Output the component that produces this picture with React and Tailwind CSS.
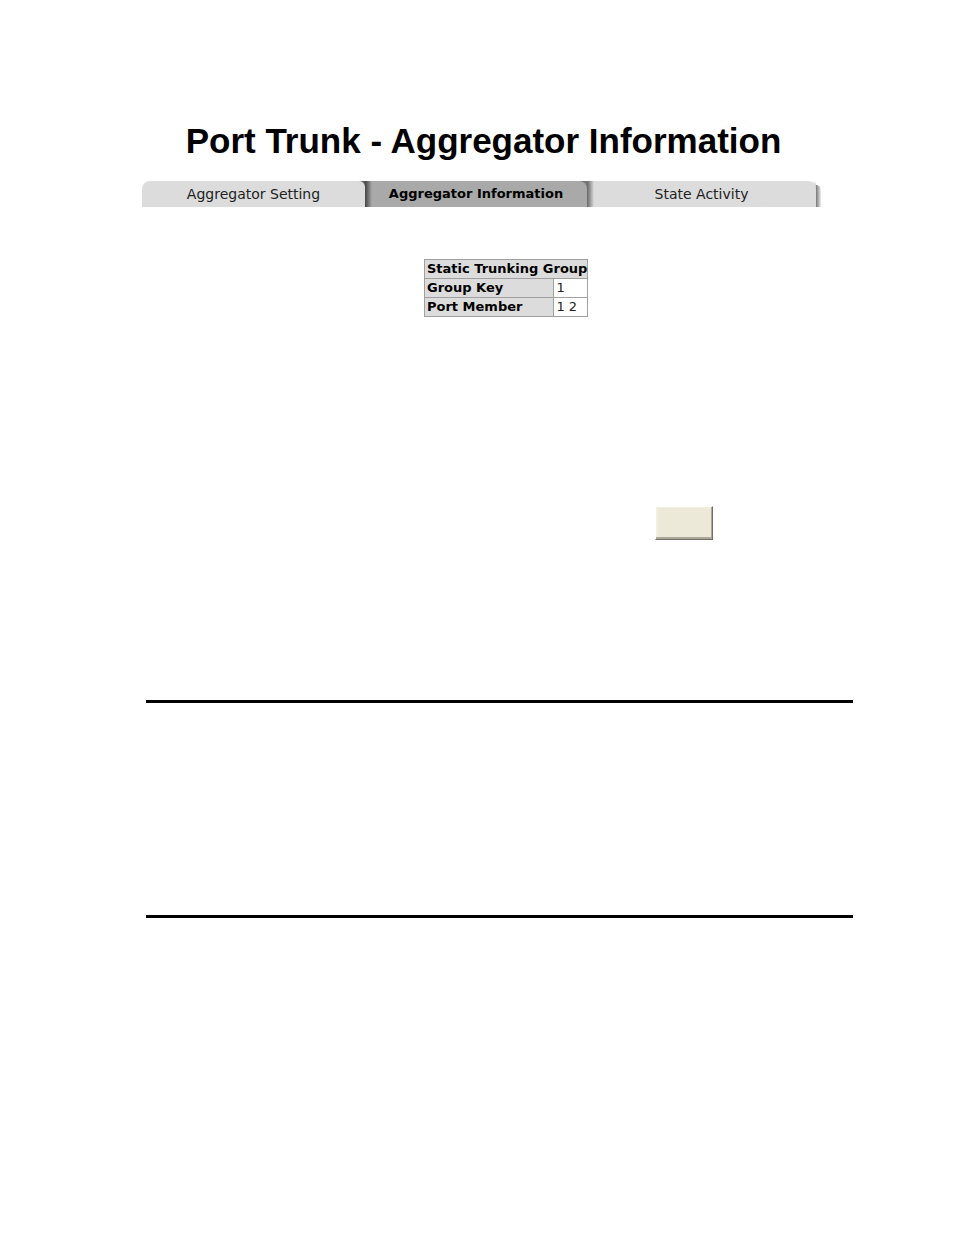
import React from "react";

const rows = [
	{ name: "Group Key", value: "1" },
	{ name: "Port Member", value: "1 2" },
];

const Tabs = () => {
	return (
		<nav className="mt-5 font-['DejaVu_Sans',sans-serif] text-sm leading-[26px] text-[#222222]">
			<ul className="flex text-center">
				<li className="grow-[223] basis-0 bg-linear-to-r from-white from-90% to-[#555555]">
					<a href="#" className="block rounded-tl-lg rounded-tr-md bg-[#dcdcdc]">
						Aggregator Setting
					</a>
				</li>
				<li className="grow-[222] basis-0 bg-[#777777]">
					<a
						href="#"
						aria-current="page"
						className="block rounded-tr-lg bg-linear-to-r from-[#444444] to-[#a9a9a9] to-[7px] text-[13px] font-bold text-black"
					>
						Aggregator Information
					</a>
				</li>
				<li className="grow-[229] basis-0 bg-linear-to-b from-white to-[#999999] to-[10px]">
					<a
						href="#"
						className="block rounded-tr-lg bg-linear-to-r from-[#666666] to-[#dcdcdc] to-[7px]"
					>
						State Activity
					</a>
				</li>
				<li
					aria-hidden="true"
					className="mt-1 w-[5px] rounded-tr-md bg-linear-to-r from-[#777777] to-[#eeeeee]"
				></li>
			</ul>
		</nav>
	);
};

const App = () => {
	return (
		<div className="min-h-screen bg-white pt-[120px] pr-[101px] pl-[142px] text-black">
			<div className="pr-8">
				<h1 className="pl-1 text-center font-['Liberation_Sans',sans-serif] text-[35px] leading-[41px] font-bold">
					Port Trunk - Aggregator Information
				</h1>
				<Tabs />
				<table className="mt-[52px] ml-[282px] border-collapse font-['DejaVu_Sans',sans-serif] text-[13px] leading-[18px]">
					<thead>
						<tr>
							<th
								colSpan={2}
								className="border border-[#a0a0a0] bg-[#dcdcdc] py-0 pr-0 pl-0.5 text-left font-bold"
							>
								Static Trunking Group
							</th>
						</tr>
					</thead>
					<tbody>
						{rows.map((row) => (
							<tr key={row.name}>
								<th
									scope="row"
									className="border border-[#a0a0a0] bg-[#dcdcdc] py-0 pr-0 pl-0.5 text-left font-bold"
								>
									{row.name}
								</th>
								<td className="w-[34px] border border-[#a0a0a0] py-0 pr-0 pl-0.5 text-[#222222]">
									{row.value}
								</td>
							</tr>
						))}
					</tbody>
				</table>
			</div>
			<div className="mt-[189px] flex justify-end pr-[140px]">
				<button
					type="button"
					aria-label="Apply"
					className="h-[34px] w-[58px] border border-t-white border-r-[#716f64] border-b-[#716f64] border-l-white bg-[#ece9d8] shadow-[inset_-1px_-2px_#aca899,inset_2px_1px_#f1efe2]"
				></button>
			</div>
			<hr className="mt-40 ml-1 border-t-3 border-black" />
			<hr className="mt-53 ml-1 border-t-3 border-black" />
		</div>
	);
};

export default App;
